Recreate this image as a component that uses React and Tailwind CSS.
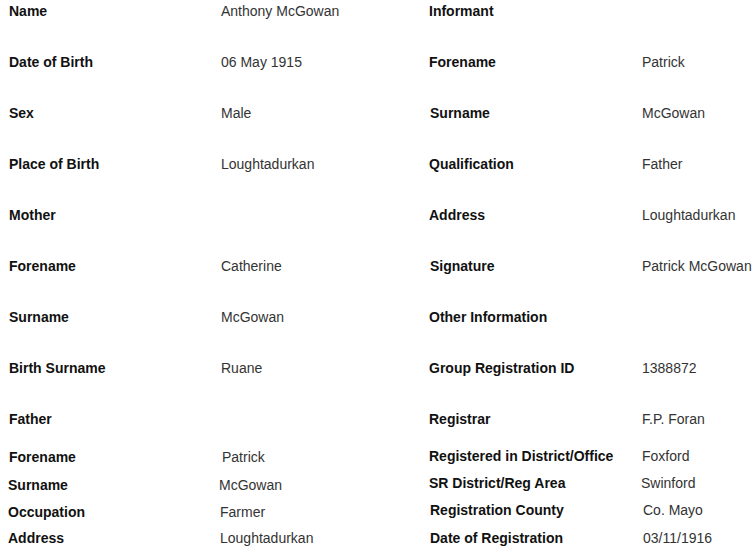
import React from "react";

// Birth record — two label/value tables side by side

const left = [
  { label: "Name", value: "Anthony McGowan", h: "h-[51px]" },
  { label: "Date of Birth", value: "06 May 1915", h: "h-[51px]" },
  { label: "Sex", value: "Male", h: "h-[51px]" },
  { label: "Place of Birth", value: "Loughtadurkan", h: "h-[51px]" },
  { label: "Mother", value: "", h: "h-[51px]" },
  { label: "Forename", value: "Catherine", h: "h-[51px]" },
  { label: "Surname", value: "McGowan", h: "h-[51px]" },
  { label: "Birth Surname", value: "Ruane", h: "h-[51px]" },
  { label: "Father", value: "", h: "h-[38px]" },
  { label: "Forename", value: "Patrick", h: "h-[28px]", vx: "pl-[1px]" },
  { label: "Surname", value: "McGowan", h: "h-[27px]", lx: "-ml-[1px]", vx: "-ml-[1px]" },
  { label: "Occupation", value: "Farmer", h: "h-[26px]", lx: "-ml-[1px]" },
  { label: "Address", value: "Loughtadurkan", h: "h-[20px]", lx: "-ml-[1px]" },
];

const right = [
  { label: "Informant", value: "", h: "h-[51px]" },
  { label: "Forename", value: "Patrick", h: "h-[51px]" },
  { label: "Surname", value: "McGowan", h: "h-[51px]", lx: "pl-[1px]" },
  { label: "Qualification", value: "Father", h: "h-[51px]" },
  { label: "Address", value: "Loughtadurkan", h: "h-[51px]" },
  { label: "Signature", value: "Patrick McGowan", h: "h-[51px]", lx: "pl-[1px]" },
  { label: "Other Information", value: "", h: "h-[51px]" },
  { label: "Group Registration ID", value: "1388872", h: "h-[51px]" },
  { label: "Registrar", value: "F.P. Foran", h: "h-[37px]" },
  { label: "Registered in District/Office", value: "Foxford", h: "h-[27px]" },
  { label: "SR District/Reg Area", value: "Swinford", h: "h-[27px]", vx: "-ml-[1px]" },
  { label: "Registration County", value: "Co. Mayo", h: "h-[28px]", lx: "pl-[1px]", vx: "pl-[1px]" },
  { label: "Date of Registration", value: "03/11/1916", h: "h-[20px]", lx: "pl-[1px]", vx: "pl-[1px]" },
];

function Row({ row, labelW }) {
  return (
    <div className={`flex items-start ${row.h}`}>
      <div className={`${labelW} shrink-0 font-bold text-[#111] ${row.lx || ""}`}>{row.label}</div>
      <div className={`whitespace-nowrap text-[#333] ${row.vx || ""}`}>{row.value}</div>
    </div>
  );
}

export default function App() {
  return (
    <div className="w-[755px] h-[550px] overflow-hidden bg-white font-['Liberation_Sans',Arial,sans-serif] text-[14px] leading-[16px]">
      <div className="flex pt-[3px]">
        <div className="w-[421px] shrink-0 pl-[9px]">
          {left.map((r, i) => (
            <Row key={i} row={r} labelW="w-[212px]" />
          ))}
        </div>
        <div className="flex-1 pl-[8px]">
          {right.map((r, i) => (
            <Row key={i} row={r} labelW="w-[213px]" />
          ))}
        </div>
      </div>
    </div>
  );
}
